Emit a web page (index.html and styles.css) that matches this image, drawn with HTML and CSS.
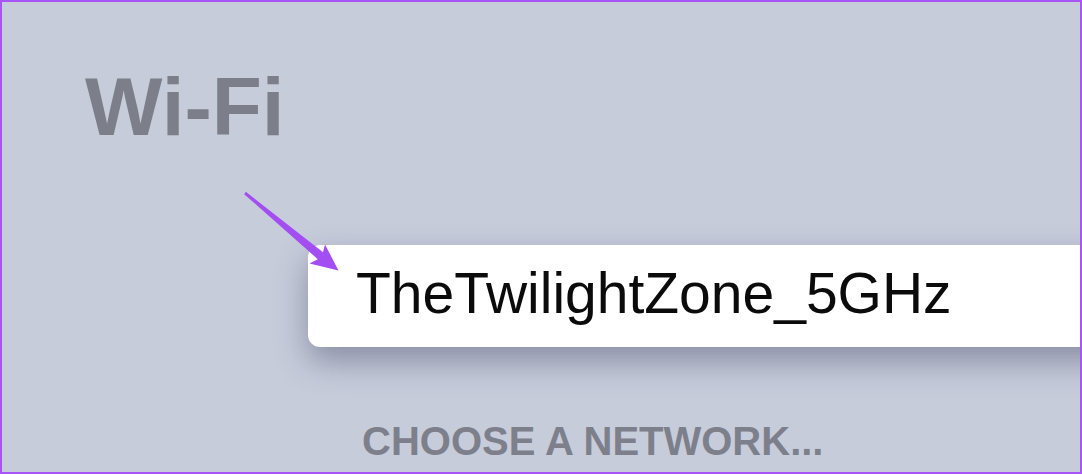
FILE: index.html
```html
<!DOCTYPE html>
<html lang="en">
<head>
<meta charset="utf-8">
<title>Wi-Fi</title>
<link rel="stylesheet" href="styles.css">
</head>
<body>
  <div class="frame">
    <h1 class="title">Wi-Fi</h1>
    <div class="network-row">
      <div class="network-card">TheTwilightZone_5GHz</div>
    </div>
    <h2 class="section-label">CHOOSE A NETWORK...</h2>

    <!-- pointer arrow toward the selected network -->
    <svg class="pointer" width="1082" height="474" viewBox="0 0 1082 474" aria-hidden="true">
      <polygon points="244.2,194.2 245.8,191.8 323,252.2 325,244.5 338.5,270.5 309.5,263.5 317.8,259.2" fill="#a34ef2"/>
    </svg>
  </div>
</body>
</html>
```

FILE: styles.css
```css
html, body {
  margin: 0;
  padding: 0;
}

body {
  width: 1082px;
  height: 474px;
  overflow: hidden;
  background: #c7ccdc;
  font-family: "Liberation Sans", Arial, sans-serif;
}

.frame {
  position: relative;
  box-sizing: border-box;
  width: 1082px;
  height: 474px;
  border: 2px solid #a855f7;
  background: #c7ccdb;
  overflow: hidden;
  display: flex;
  flex-direction: column;
}

.title {
  margin: 0;
  padding: 64px 0 0 83px;
  font-size: 82px;
  line-height: 82px;
  font-weight: 700;
  color: #7c7f8a;
}

.network-row {
  margin-top: 97px;
  padding-left: 306px;
}

.network-card {
  box-sizing: border-box;
  height: 102px;
  width: 820px;
  padding: 20px 0 25px 48px;
  background: #ffffff;
  border-radius: 12px 0 0 12px;
  box-shadow: 0 14px 32px rgba(66, 74, 104, 0.48);
  font-size: 57px;
  line-height: 57px;
  color: #0b0b0b;
  white-space: nowrap;
}

.section-label {
  margin: 74px 0 0 0;
  padding-left: 360px;
  font-size: 40px;
  line-height: 40px;
  font-weight: 700;
  color: #7d808b;
  white-space: nowrap;
}

.pointer {
  position: absolute;
  left: -2px;
  top: -2px;
  pointer-events: none;
}
```
